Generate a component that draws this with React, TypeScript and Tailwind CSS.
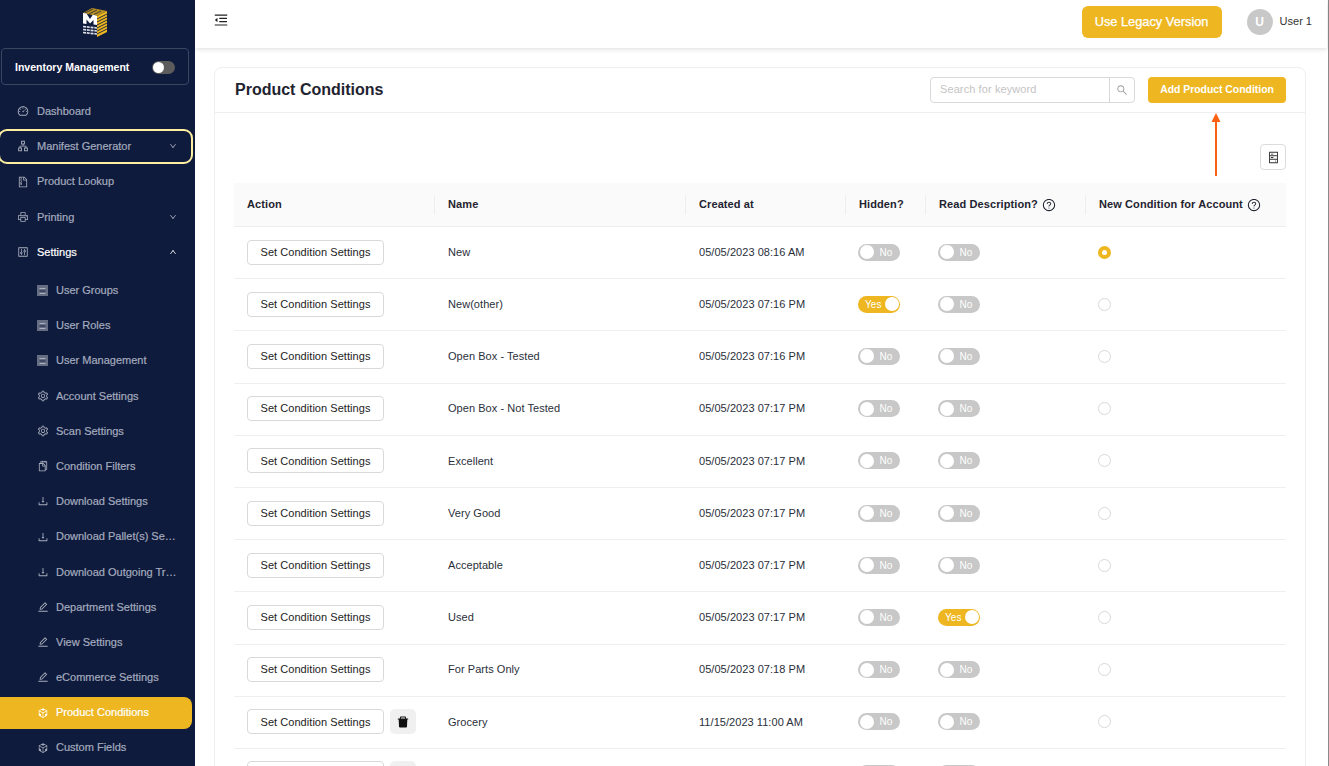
import React from "react";
import {
  AiOutlineDashboard,
  AiOutlineApartment,
  AiOutlineFileZip,
  AiOutlinePrinter,
  AiOutlineControl,
  AiOutlineSetting,
  AiOutlineSnippets,
  AiOutlineDownload,
  AiOutlineEdit,
  AiOutlineCodeSandbox,
  AiOutlineSearch,
  AiOutlineQuestionCircle,
  AiFillDelete,
  AiOutlineMenuFold,
  AiOutlineHdd,
  AiOutlineDown,
  AiOutlineUp,
} from "react-icons/ai";

const font = { fontFamily: "'Liberation Sans', Arial, sans-serif" };

function DrawerIcon({ className }: { size?: number; className?: string }) {
  return (
    <svg width="12" height="11" viewBox="0 0 12 11" className={className}>
      <rect x="0" y="0" width="11" height="11" fill="#666e84" />
      <rect x="2.5" y="3" width="6" height="1" fill="#aab0bf" />
      <rect x="2.5" y="5.5" width="6" height="1" fill="#1a2548" />
      <rect x="2.5" y="8" width="6" height="1" fill="#aab0bf" />
    </svg>
  );
}

function Logo() {
  return (
    <svg width="24" height="29" viewBox="0 0 24 29" className="block">
      <polygon points="0,5 9,0 24,3 14,8" fill="#b78e1f" />
      <path d="M2 5l8-4M6 6l8-4M10 7l8-4" stroke="#0f1b3d" strokeWidth="0.7" />
      <polygon points="14,8 24,3 24,24 14,29" fill="#eeb722" />
      <path d="M14 11l10-5M14 14l10-5M14 17l10-5M14 20l10-5M14 23l10-5M14 26l10-5" stroke="#0f1b3d" strokeWidth="0.9" />
      <polygon points="0,5 3.5,5.5 7,11 10,6.5 14,8 14,17 10.5,16.5 10.5,12 7,15.5 3.5,11.5 3.5,16 0,15.5" fill="#ffffff" />
      <path d="M0 18.5l14 1.5M0 21.5l14 1.5M0 24.5l14 1.5" stroke="#dfe1e8" strokeWidth="1.7" strokeDasharray="3 0.8" />
    </svg>
  );
}

function NavItem({ icon: I, label, chevron, outlined }: { icon: any; label: string; chevron?: "up" | "down"; outlined?: boolean }) {
  return (
    <div
      className={`flex h-[35.2px] items-center pl-[17px] text-[11px] [-webkit-text-stroke:0.2px] ${
        label === "Settings" ? "text-white" : "text-[#a4abbd]"
      } ${outlined ? "-ml-[2px] mr-[2px] rounded-[9px] border-2 border-[#fdeea0] pr-[14px]" : "pr-[18px]"}`}
    >
      <I size={12} className="mr-[8px] shrink-0 text-[#a8aebc]" />
      <span className="flex-1 truncate">{label}</span>
      {chevron === "down" && <AiOutlineDown size={8} className="text-[#b5bac8]" />}
      {chevron === "up" && <AiOutlineUp size={8} className="text-white" />}
    </div>
  );
}

function SubItem({ icon: I, label, active }: { icon: any; label: string; active?: boolean }) {
  return (
    <div className={`flex h-[35.2px] items-center pl-[37px] text-[11px] [-webkit-text-stroke:0.2px] ${active ? "" : "text-[#a4abbd]"}`}>
      {active ? (
        <div className="-ml-[37px] mr-[3px] flex h-[32px] w-[192px] items-center rounded-r-[8px] bg-[#eeb722] pl-[37px] pr-2 text-white">
          <I size={12} className="mr-[7px] shrink-0" />
          <span className="truncate">{label}</span>
        </div>
      ) : (
        <>
          <I size={12} className="mr-[7px] shrink-0 text-[#a8aebc]" />
          <span className="w-[122px] truncate">{label}</span>
        </>
      )}
    </div>
  );
}

function Sidebar() {
  return (
    <aside className="flex h-full w-[195px] shrink-0 flex-col bg-[#0f1b3d]">
      <div className="flex h-[48px] items-start justify-center pr-[5px] pt-[8px]">
        <Logo />
      </div>
      <div className="mx-[1px] flex h-[37px] w-[188px] items-center justify-between rounded-[4px] border border-[#3a4560] pl-[13px] pr-[13px] pt-[1px] text-[10.5px] font-bold text-white">
        <span className="pt-[1px]">Inventory Management</span>
        <span className="relative h-[13px] w-[23px] rounded-full bg-[#5c5c5c]">
          <span className="absolute left-[1px] top-[1px] h-[11px] w-[11px] rounded-full bg-white" />
        </span>
      </div>
      <div className="mt-[8.6px]">
        <NavItem icon={AiOutlineDashboard} label="Dashboard" />
        <NavItem icon={AiOutlineApartment} label="Manifest Generator" chevron="down" outlined />
        <NavItem icon={AiOutlineFileZip} label="Product Lookup" />
        <NavItem icon={AiOutlinePrinter} label="Printing" chevron="down" />
        <NavItem icon={AiOutlineControl} label="Settings" chevron="up" />
      </div>
      <div className="mt-[3.15px]">
        <SubItem icon={DrawerIcon} label="User Groups" />
        <SubItem icon={DrawerIcon} label="User Roles" />
        <SubItem icon={DrawerIcon} label="User Management" />
        <SubItem icon={AiOutlineSetting} label="Account Settings" />
        <SubItem icon={AiOutlineSetting} label="Scan Settings" />
        <SubItem icon={AiOutlineSnippets} label="Condition Filters" />
        <SubItem icon={AiOutlineDownload} label="Download Settings" />
        <SubItem icon={AiOutlineDownload} label="Download Pallet(s) Settings" />
        <SubItem icon={AiOutlineDownload} label="Download Outgoing Trailer" />
        <SubItem icon={AiOutlineEdit} label="Department Settings" />
        <SubItem icon={AiOutlineEdit} label="View Settings" />
        <SubItem icon={AiOutlineEdit} label="eCommerce Settings" />
        <SubItem icon={AiOutlineCodeSandbox} label="Product Conditions" active />
        <SubItem icon={AiOutlineCodeSandbox} label="Custom Fields" />
      </div>
    </aside>
  );
}

function Toggle({ on }: { on?: boolean }) {
  return on ? (
    <span className="flex h-[17px] w-[42px] items-center justify-between rounded-full bg-[#eeb722] pl-[7px] pr-[1.5px] text-[10px] text-white">
      Yes
      <span className="h-[14px] w-[14px] rounded-full bg-white" />
    </span>
  ) : (
    <span className="flex h-[17px] w-[42px] items-center rounded-full bg-[#c8c8c8] pl-[1.5px] text-[10px] text-white">
      <span className="h-[14px] w-[14px] rounded-full bg-white" />
      <span className="ml-[6px]">No</span>
    </span>
  );
}

const rows = [
  ["New", "05/05/2023 08:16 AM", false, false, true, false],
  ["New(other)", "05/05/2023 07:16 PM", true, false, false, false],
  ["Open Box - Tested", "05/05/2023 07:16 PM", false, false, false, false],
  ["Open Box - Not Tested", "05/05/2023 07:17 PM", false, false, false, false],
  ["Excellent", "05/05/2023 07:17 PM", false, false, false, false],
  ["Very Good", "05/05/2023 07:17 PM", false, false, false, false],
  ["Acceptable", "05/05/2023 07:17 PM", false, false, false, false],
  ["Used", "05/05/2023 07:17 PM", false, true, false, false],
  ["For Parts Only", "05/05/2023 07:18 PM", false, false, false, false],
  ["Grocery", "11/15/2023 11:00 AM", false, false, false, true],
  ["", "", false, false, false, true],
] as const;

const cols = "grid grid-cols-[200px_251px_160px_80px_160px_201px]";

function Th({ children, first }: { children: React.ReactNode; first?: boolean }) {
  return (
    <div className={`relative flex items-center text-[11px] font-bold tracking-[0.1px] text-[#1f2430] ${first ? "pl-[13px]" : "pl-[14px]"}`}>
      {!first && <span className="absolute left-0 top-[12px] h-[19px] w-px bg-[#eeeeee]" />}
      {children}
    </div>
  );
}

export default function App() {
  return (
    <div className="flex h-[766px] w-[1329px] overflow-hidden bg-white" style={font}>
      <Sidebar />
      <main className="min-w-0 flex-1">
        <header className="relative flex h-[48px] w-[1132px] items-center justify-between pl-[18px] pr-[15px] shadow-[0_1px_5px_rgba(0,0,0,0.14)]">
          <AiOutlineMenuFold size={16} className="-mt-[9px] text-[#222]" />
          <div className="-mt-[5px] flex items-center">
            <button className="h-[32px] w-[140px] rounded-[6px] bg-[#eeb722] text-[12.8px] text-white [-webkit-text-stroke:0.25px]">Use Legacy Version</button>
            <span className="ml-[25px] flex h-[26px] w-[26px] items-center justify-center rounded-full bg-[#c8c8c8] text-[12px] font-bold text-white">U</span>
            <span className="ml-[7px] text-[11px] text-[#333]">User 1</span>
          </div>
        </header>
        <section className="ml-[19px] mt-[19px] w-[1092px] rounded-t-[8px] border border-[#efefef]">
          <div className="flex h-[45px] items-center border-b border-[#efefef] pl-[20px] pr-[19px]">
            <h1 className="flex-1 text-[16px] font-bold text-[#1f2430]">Product Conditions</h1>
            <div className="flex h-[26px] w-[205px] items-center rounded-[4px] border border-[#d9d9d9]">
              <span className="flex-1 pb-[1px] pl-[9px] text-[11px] tracking-[0.1px] text-[#c4c4c4]">Search for keyword</span>
              <span className="flex h-full w-[25px] items-center justify-center border-l border-[#d9d9d9]">
                <AiOutlineSearch size={12} className="text-[#999]" />
              </span>
            </div>
            <button className="ml-[13px] h-[26px] w-[138px] rounded-[4px] bg-[#eeb722] pb-[1px] text-[10.4px] font-bold text-white">Add Product Condition</button>
          </div>
          <div className="relative px-[19px]">
            <svg width="10" height="66" viewBox="0 0 10 66" className="absolute right-[84px] top-0">
              <polygon points="5,0 9.5,9 0.5,9" fill="#fa5f14" />
              <rect x="4" y="8" width="2" height="55" fill="#fa5f14" />
            </svg>
            <div className="flex h-[70px] items-end justify-end pb-[13px] pt-[31px]">
              <span className="flex h-[26px] w-[26px] items-center justify-center rounded-[4px] border border-[#dcdcdc]">
                <AiOutlineHdd size={13} className="text-[#333]" />
              </span>
            </div>
            <div className={`${cols} h-[44px] border-b border-[#efefef] bg-[#fafafa]`}>
              <Th first>Action</Th>
              <Th>Name</Th>
              <Th>Created at</Th>
              <Th>Hidden?</Th>
              <Th>
                Read Description?
                <AiOutlineQuestionCircle size={14} className="ml-[4px]" />
              </Th>
              <Th>
                New Condition for Account
                <AiOutlineQuestionCircle size={14} className="ml-[4px]" />
              </Th>
            </div>
            {rows.map((r, i) => (
              <div key={i} className={`${cols} h-[52.2px] items-center border-b border-[#efefef] pb-[1px] text-[11px] tracking-[0.05px] text-[#2a2f3a]`}>
                <div className="flex items-center pl-[13px]">
                  <button className="h-[25px] w-[137px] rounded-[4px] border border-[#d9d9d9] bg-white text-[11px] text-[#222]">Set Condition Settings</button>
                  {r[5] && (
                    <span className="ml-[6px] flex h-[25px] w-[26px] items-center justify-center rounded-[5px] bg-[#f0f0f0]">
                      <AiFillDelete size={14} className="text-[#111]" />
                    </span>
                  )}
                </div>
                <div className="pl-[14px]">{r[0]}</div>
                <div className="pl-[14px]">{r[1]}</div>
                <div className="pl-[13px]"><Toggle on={r[2]} /></div>
                <div className="pl-[13px]"><Toggle on={r[3]} /></div>
                <div className="pl-[13px]">
                  {r[4] ? (
                    <span className="flex h-[13px] w-[13px] items-center justify-center rounded-full bg-[#eeb722]">
                      <span className="h-[5px] w-[5px] rounded-full bg-white" />
                    </span>
                  ) : (
                    <span className="block h-[13px] w-[13px] rounded-full border border-[#d9d9d9]" />
                  )}
                </div>
              </div>
            ))}
          </div>
        </section>
      </main>
      <div className="w-[1px] shrink-0 bg-[#8a8a8a]" />
    </div>
  );
}
